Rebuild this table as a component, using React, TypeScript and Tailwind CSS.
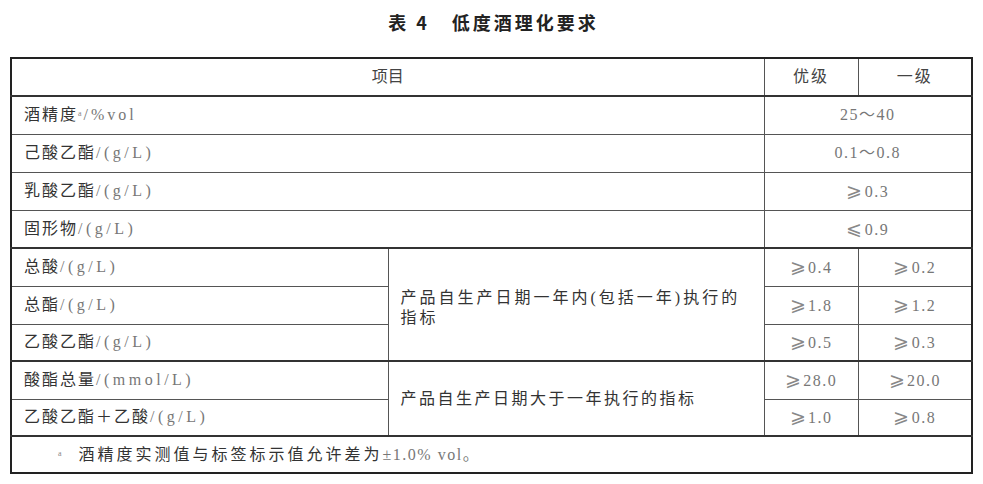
const cjk = { fontFamily: '"Liberation Serif", "Noto Sans CJK SC", serif' };

function Label({ name, unit }: { name: string; unit: string }) {
  return (
    <span className="text-[16px] tracking-[2px]">
      <span className="text-[#333]">{name}</span>
      <span className="text-[#777] tracking-[3.5px]">{unit}</span>
    </span>
  );
}

function Val({ v }: { v: string }) {
  const sign = v.startsWith("⩾") || v.startsWith("⩽");
  return (
    <span className="tracking-[1.5px]">
      {sign ? (
        <>
          <span className="text-[19px] text-[#888] mr-[1px]">{v[0]}</span>
          {v.slice(1)}
        </>
      ) : (
        v
      )}
    </span>
  );
}

const topRows: [string, string, string][] = [
  ["酒精度", "", "25～40"],
  ["己酸乙酯", "/(g/L)", "0.1～0.8"],
  ["乳酸乙酯", "/(g/L)", "⩾0.3"],
  ["固形物", "/(g/L)", "⩽0.9"],
];

const groupA: [string, string, string][] = [
  ["总酸", "⩾0.4", "⩾0.2"],
  ["总酯", "⩾1.8", "⩾1.2"],
  ["乙酸乙酯", "⩾0.5", "⩾0.3"],
];

const groupB: [string, string, string, string][] = [
  ["酸酯总量", "/(mmol/L)", "⩾28.0", "⩾20.0"],
  ["乙酸乙酯＋乙酸", "/(g/L)", "⩾1.0", "⩾0.8"],
];

export default function App() {
  const cell = "border border-[#555] px-3";
  const val = "border border-[#555] text-center text-[16px] text-[#777]";
  return (
    <div className="w-[983px] h-[484px] bg-white pt-[9px]" style={cjk}>
      <h1
        className="text-center text-[18px] font-bold text-[#222] tracking-[3px] h-[48px] pl-[4px]"
        style={{ fontFamily: '"Noto Sans CJK SC", sans-serif' }}
      >
        表 4<span className="inline-block w-[22px]" />低度酒理化要求
      </h1>
      <table className="ml-[10px] w-[961px] border-collapse border-2 border-[#222] table-fixed">
        <colgroup>
          <col className="w-[377px]" />
          <col className="w-[376px]" />
          <col className="w-[94px]" />
          <col className="w-[114px]" />
        </colgroup>
        <tbody>
          <tr className="h-[38px] border-b-2 border-[#333]">
            <td colSpan={2} className="border border-[#555] text-center text-[16px] text-[#444]">
              项目
            </td>
            <td className="border border-[#555] text-center text-[16px] text-[#444] tracking-[2px]">优级</td>
            <td className="border border-[#555] text-center text-[16px] text-[#444] tracking-[2px]">一级</td>
          </tr>
          {topRows.map(([n, u, v], i) => (
            <tr key={n} className={i === 3 ? "h-[38px] border-b-2 border-[#333]" : "h-[38px]"}>
              <td colSpan={2} className={cell}>
                {i === 0 ? (
                  <span className="text-[16px] tracking-[2px]">
                    <span className="text-[#333]">酒精度</span>
                    <sup className="text-[8px] text-[#888]">a</sup>
                    <span className="text-[#777] tracking-[3px]">/%vol</span>
                  </span>
                ) : (
                  <Label name={n} unit={u} />
                )}
              </td>
              <td colSpan={2} className={val}>
                <Val v={v} />
              </td>
            </tr>
          ))}
          {groupA.map(([n, a, b], i) => (
            <tr key={n} className={i === 2 ? "h-[37px] border-b-2 border-[#333]" : "h-[38px]"}>
              <td className={cell}>
                <Label name={n} unit="/(g/L)" />
              </td>
              {i === 0 && (
                <td rowSpan={3} className="border border-[#555] px-3 text-[16px] text-[#333] tracking-[3px] leading-[20px] align-middle pt-[6px]">
                  产品自生产日期一年内(包括一年)执行的
                  <br />
                  指标
                </td>
              )}
              <td className={val}>
                <Val v={a} />
              </td>
              <td className={val}>
                <Val v={b} />
              </td>
            </tr>
          ))}
          {groupB.map(([n, u, a, b], i) => (
            <tr key={n} className={i === 1 ? "h-[37px] border-b-2 border-[#333]" : "h-[38px]"}>
              <td className={cell}>
                <Label name={n} unit={u} />
              </td>
              {i === 0 && (
                <td rowSpan={2} className="border border-[#555] px-3 text-[16px] text-[#333] tracking-[2.5px]">
                  产品自生产日期大于一年执行的指标
                </td>
              )}
              <td className={val}>
                <Val v={a} />
              </td>
              <td className={val}>
                <Val v={b} />
              </td>
            </tr>
          ))}
          <tr className="h-[37px]">
            <td colSpan={4} className="pl-[46px] text-[16px] text-[#333] tracking-[3px]">
              <sup className="text-[8px] text-[#888] mr-[14px]">a</sup>
              酒精度实测值与标签标示值允许差为<span className="text-[#777] tracking-[1.5px]">±1.0% vol。</span>
            </td>
          </tr>
        </tbody>
      </table>
    </div>
  );
}
